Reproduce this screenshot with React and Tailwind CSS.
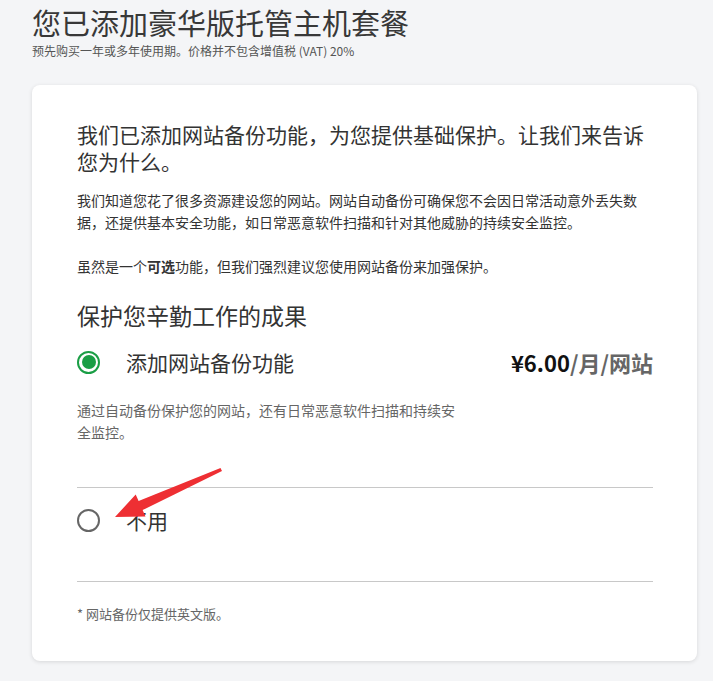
import React from "react";

const font = { fontFamily: '"Noto Sans CJK SC", "Noto Sans", sans-serif' };

export default function App() {
  return (
    <div
      className="relative min-h-screen w-full bg-[#f4f5f7] pl-[32px] pr-[16px] pt-[2px] pb-[21px] [text-spacing-trim:space-all]"
      style={font}
    >
      <h1 className="text-[29px] leading-[40px] text-[#383838] font-normal">
        您已添加豪华版托管主机套餐
      </h1>
      <p className="text-[12px] leading-[18px] text-[#555]">
        预先购买一年或多年使用期。价格并不包含增值税 (VAT) 20%
      </p>

      <div className="mt-[25px] rounded-[8px] bg-white shadow-[0_1px_4px_rgba(0,0,0,0.12)] pl-[45px] pr-[44px] pt-[36px] pb-[37px]">
        <h2 className="text-[21px] leading-[27px] text-[#333] font-normal">
          我们已添加网站备份功能，为您提供基础保护。让我们来告诉您为什么。
        </h2>
        <p className="mt-[14px] max-w-[566px] text-[14px] leading-[22px] text-[#333]">
          我们知道您花了很多资源建设您的网站。网站自动备份可确保您不会因日常活动意外丢失数据，还提供基本安全功能，如日常恶意软件扫描和针对其他威胁的持续安全监控。
        </p>
        <p className="mt-[22px] text-[14px] leading-[22px] text-[#333]">
          虽然是一个<span className="font-bold">可选</span>功能，但我们强烈建议您使用网站备份来加强保护。
        </p>

        <h3 className="mt-[23px] text-[23px] leading-[30px] text-[#333] font-normal">
          保护您辛勤工作的成果
        </h3>

        <div className="mt-[17px] flex items-center">
          <span className="flex h-[23px] w-[23px] items-center justify-center rounded-full border-[2px] border-[#1a9e45]">
            <span className="h-[14px] w-[14px] rounded-full bg-[#1a9e45]" />
          </span>
          <span className="ml-[26px] text-[21px] leading-[30px] text-[#333]">
            添加网站备份功能
          </span>
          <span className="ml-auto text-[22px] leading-[30px] font-bold">
            <span className="text-[#111]">¥6.00</span>
            <span className="text-[#666]">/月/网站</span>
          </span>
        </div>
        <p className="mt-[22px] max-w-[385px] text-[14px] leading-[22px] text-[#666]">
          通过自动备份保护您的网站，还有日常恶意软件扫描和持续安全监控。
        </p>

        <div className="mt-[44px] border-t border-[#c8c8c8]" />
        <div className="flex items-center pt-[17px] pb-[46px]">
          <span className="h-[23px] w-[23px] rounded-full border-[2px] border-[#666]" />
          <span className="ml-[26px] text-[21px] leading-[30px] text-[#333]">不用</span>
        </div>
        <div className="border-t border-[#c8c8c8]" />

        <p className="mt-[22px] text-[13px] leading-[20px] text-[#666]">
          * 网站备份仅提供英文版。
        </p>
      </div>

      <svg
        className="pointer-events-none absolute left-0 top-0"
        width="713"
        height="681"
        viewBox="0 0 713 681"
      >
        <polygon
          points="115,517 135.7,494.5 138.6,500.9 220.5,468 222,471 142.6,510.1 145.5,516.5"
          fill="#ee2f33"
        />
      </svg>
    </div>
  );
}
